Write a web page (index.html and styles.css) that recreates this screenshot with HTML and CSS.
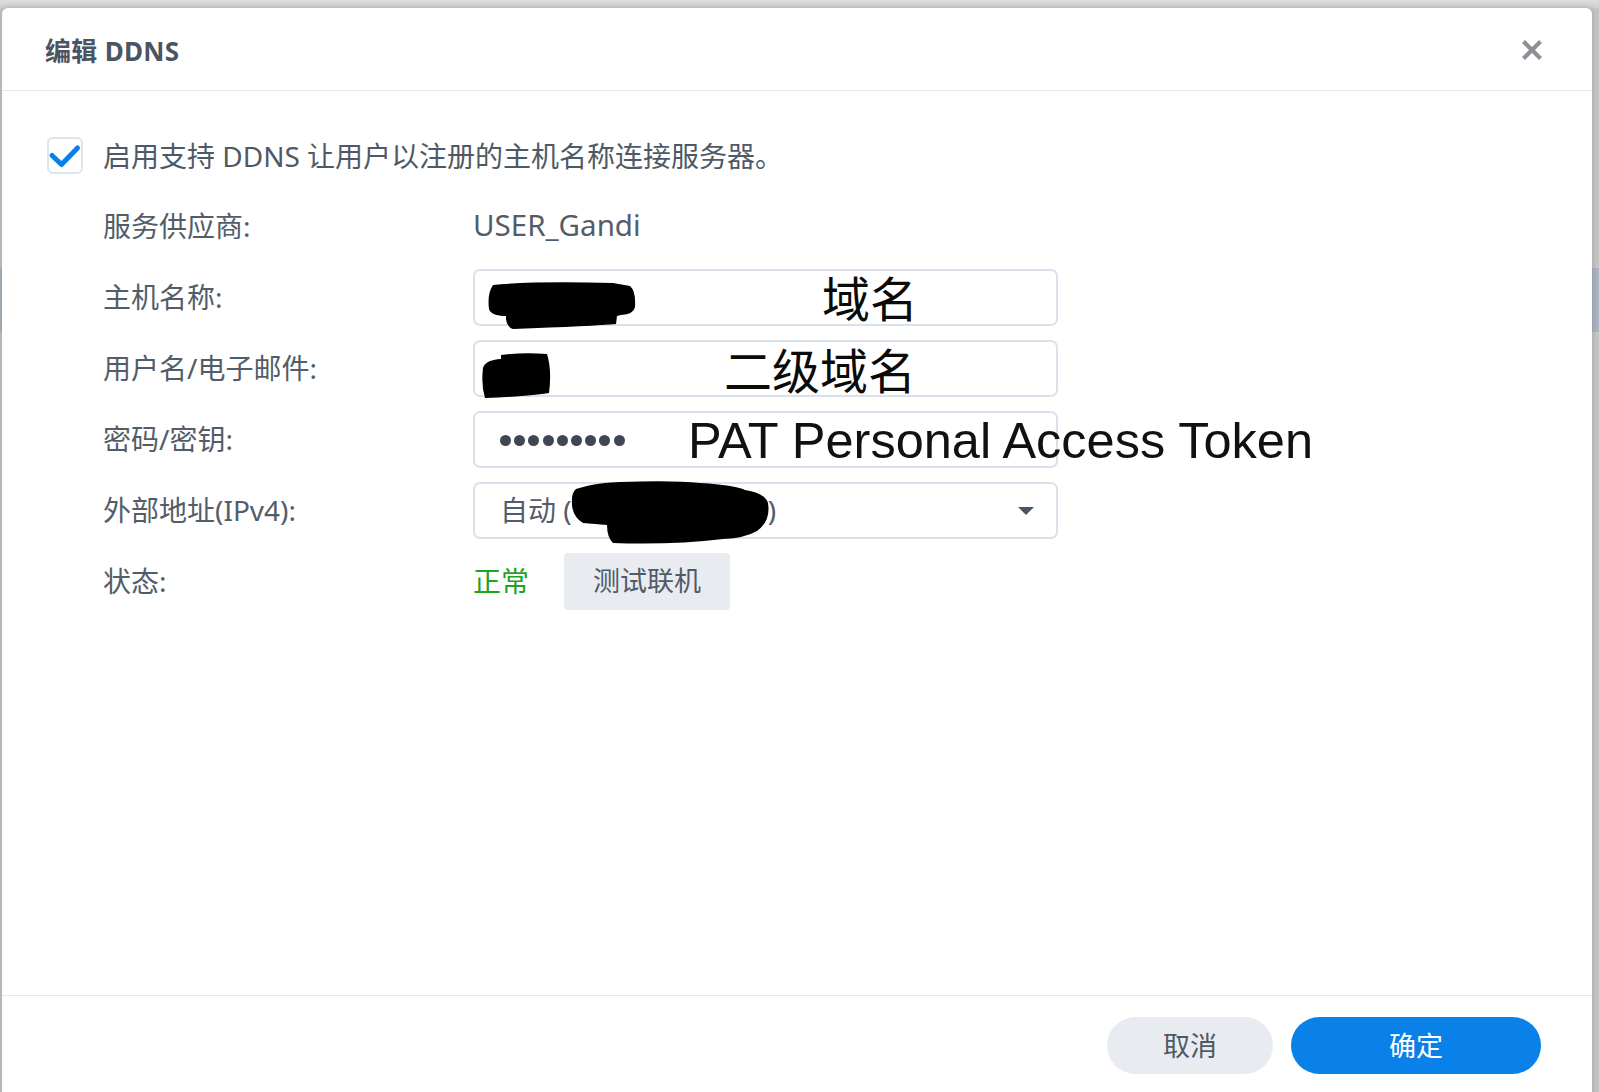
FILE: index.html
```html
<!DOCTYPE html>
<html lang="zh-CN">
<head>
<meta charset="utf-8">
<title>编辑 DDNS</title>
<link rel="stylesheet" href="styles.css">
</head>
<body>
<div class="dialog">
  <header class="dlg-header">
    <h1 class="dlg-title">编辑 DDNS</h1>
    <button class="dlg-close" aria-label="关闭">
      <svg width="22" height="22" viewBox="0 0 22 22"><path d="M2.5 2.5 L19.5 19.5 M19.5 2.5 L2.5 19.5" stroke="#8c9198" stroke-width="4.2" fill="none"/></svg>
    </button>
  </header>

  <main class="dlg-body">
    <label class="enable-row">
      <span class="checkbox">
        <svg width="36" height="37" viewBox="0 0 36 37"><path d="M5 18.5 L14.5 27.5 L30.5 11" stroke="#0c7fe7" stroke-width="5" stroke-linecap="round" stroke-linejoin="round" fill="none"/></svg>
      </span>
      <span class="enable-text">启用支持 DDNS 让用户以注册的主机名称连接服务器。</span>
    </label>

    <div class="form">
      <div class="form-row">
        <div class="label">服务供应商:</div>
        <div class="field"><span class="plain">USER_Gandi</span></div>
      </div>

      <div class="form-row">
        <div class="label">主机名称:</div>
        <div class="field">
          <div class="input"></div>
          <svg class="redact redact-host" width="170" height="64" viewBox="0 0 170 64"><path d="M20 16 Q60 12 140 14 L157 17 Q163 22 162 38 Q161 45 148 46 L144 47 L143 55 Q120 57 40 60 Q34 58 33 50 L33 47 Q18 47 16 40 Q14 25 20 16 Z" fill="#000"/></svg>
          <span class="note note-cjk note-host">域名</span>
        </div>
      </div>

      <div class="form-row">
        <div class="label">用户名/电子邮件:</div>
        <div class="field">
          <div class="input"></div>
          <svg class="redact redact-user" width="90" height="64" viewBox="0 0 90 64"><path d="M28 15 Q50 12 74 14 Q79 30 76 53 Q60 56 12 58 Q8 45 10 28 Q12 20 28 19 Z" fill="#000"/></svg>
          <span class="note note-cjk note-user">二级域名</span>
        </div>
      </div>

      <div class="form-row">
        <div class="label">密码/密钥:</div>
        <div class="field">
          <div class="input input-pass">
            <span class="dot"></span><span class="dot"></span><span class="dot"></span><span class="dot"></span><span class="dot"></span><span class="dot"></span><span class="dot"></span><span class="dot"></span><span class="dot"></span>
          </div>
          <span class="note note-pat">PAT Personal Access Token</span>
        </div>
      </div>

      <div class="form-row">
        <div class="label">外部地址(IPv4):</div>
        <div class="field">
          <div class="input input-select">
            <span class="select-text">自动 (<span class="ip-gap"></span>)</span>
            <span class="caret"></span>
          </div>
          <svg class="redact redact-ip" width="310" height="70" viewBox="0 0 310 70"><path d="M103 8 Q120 2 147 1 Q200 -1 227 2 Q262 4 272 9 Q292 12 295 22 Q298 40 284 50 Q272 57 250 58 Q200 64 140 62 Q134 56 134 44 L110 42 Q100 36 99 24 Q98 12 103 8 Z" fill="#000"/></svg>
        </div>
      </div>

      <div class="form-row">
        <div class="label">状态:</div>
        <div class="field field-status">
          <span class="status-ok">正常</span>
          <button class="btn-test">测试联机</button>
        </div>
      </div>
    </div>
  </main>

  <footer class="dlg-footer">
    <button class="btn btn-cancel">取消</button>
    <button class="btn btn-ok">确定</button>
  </footer>
</div>
</body>
</html>
```

FILE: styles.css
```css
* { box-sizing: border-box; }

html, body {
  margin: 0;
  padding: 0;
  height: 1092px;
  overflow: hidden;
}

body {
  background:
    linear-gradient(to bottom, #dedede 0, #cfcfcf 8px, transparent 9px),
    linear-gradient(to bottom, #c4c4c4 0 268px, #aab5c1 268px 332px, #c4c4c4 332px);
  font-family: "Noto Sans", "Noto Sans CJK SC", sans-serif;
  color: #525c68;
}

.dialog {
  margin: 8px 0 0 2px;
  width: 1590px;
  height: 1100px;
  background: #fff;
  border-radius: 6px 6px 0 0;
  box-shadow: 0 0 6px rgba(0,0,0,0.18);
  display: flex;
  flex-direction: column;
}

/* header */
.dlg-header {
  height: 83px;
  flex: none;
  border-bottom: 1px solid #e2e9f1;
  display: flex;
  align-items: center;
  justify-content: space-between;
  padding: 0 49px 0 43px;
}

.dlg-title {
  margin: 0;
  font-size: 26px;
  font-weight: 700;
  color: #4b5460;
  letter-spacing: 0.3px;
  padding-top: 2px;
}

.dlg-close {
  border: 0;
  background: none;
  padding: 0;
  width: 22px;
  height: 22px;
  display: flex;
  margin-top: 2px;
}

/* body */
.dlg-body {
  height: 904px;
  flex: none;
  padding: 36px 0 0 45px;
  display: flex;
  flex-direction: column;
  gap: 14px;
}

.enable-row {
  height: 57px;
  display: flex;
  align-items: center;
}

.checkbox {
  width: 36px;
  height: 37px;
  border: 2px solid #dce4ed;
  border-radius: 6px;
  display: flex;
  align-items: center;
  justify-content: center;
  position: relative;
}

.checkbox svg {
  position: absolute;
  left: -2px;
  top: -2px;
}

.enable-text {
  margin-left: 20px;
  font-size: 28px;
  color: #4f5965;
  padding-bottom: 2px;
}

.form {
  display: flex;
  flex-direction: column;
  gap: 14px;
  padding-left: 56px;
}

.form-row {
  display: grid;
  grid-template-columns: 370px 585px;
  height: 57px;
  align-items: center;
}

.label {
  font-size: 28px;
  color: #535d69;
  padding-bottom: 4px;
}

.field {
  position: relative;
  height: 57px;
  display: flex;
  align-items: center;
}

.plain {
  font-size: 29.5px;
  color: #535d69;
  padding-bottom: 4px;
}

.input {
  width: 585px;
  height: 57px;
  border: 2px solid #d9e2ec;
  border-radius: 7px;
  background: #fff;
  display: flex;
  align-items: center;
  padding-left: 25px;
  font-size: 28px;
  color: #535d69;
}

.input-pass {
  gap: 3.2px;
  padding-top: 2px;
}

.dot {
  width: 11px;
  height: 11px;
  border-radius: 50%;
  background: #3f4752;
}

.input-select {
  justify-content: space-between;
  padding-right: 22px;
  padding-bottom: 3px;
}

.select-text {
  white-space: nowrap;
}

.ip-gap {
  display: inline-block;
  width: 196px;
}

.caret {
  width: 0;
  height: 0;
  border-left: 8px solid transparent;
  border-right: 8px solid transparent;
  border-top: 8px solid #4a5562;
  margin-top: 4px;
}

.redact {
  position: absolute;
  left: 0;
  top: 0;
}

.redact-ip {
  top: -1px;
}

.note {
  position: absolute;
  white-space: nowrap;
  line-height: 1;
  color: #0a0a0a;
}

.note-cjk {
  font-family: "Noto Sans CJK SC", sans-serif;
  font-size: 48px;
}

.note-host {
  left: 349px;
  top: 3px;
}

.note-user {
  left: 251px;
  top: 4px;
}

.note-pat {
  font-family: "Liberation Sans", Arial, sans-serif;
  font-size: 50.5px;
  left: 215px;
  top: 5px;
  color: #111;
}

.field-status {
  gap: 35px;
}

.status-ok {
  font-size: 28px;
  color: #1fa324;
  padding-bottom: 4px;
}

.btn-test {
  width: 166px;
  height: 57px;
  border: 0;
  border-radius: 4px;
  background: #e8ecf0;
  font-family: "Noto Sans CJK SC", sans-serif;
  font-size: 27px;
  color: #515b67;
  padding: 0 0 4px;
}

/* footer */
.dlg-footer {
  flex: 1;
  border-top: 1px solid #e2e9f1;
  display: flex;
  justify-content: flex-end;
  align-items: flex-start;
  gap: 18px;
  padding: 21px 51px 0 0;
}

.btn {
  height: 57px;
  border: 0;
  border-radius: 29px;
  font-family: "Noto Sans CJK SC", sans-serif;
  font-size: 27px;
  padding: 0 0 2px;
}

.btn-cancel {
  width: 166px;
  background: #e8ecf0;
  color: #4f5965;
}

.btn-ok {
  width: 250px;
  background: #0a80e9;
  color: #fff;
}
```
